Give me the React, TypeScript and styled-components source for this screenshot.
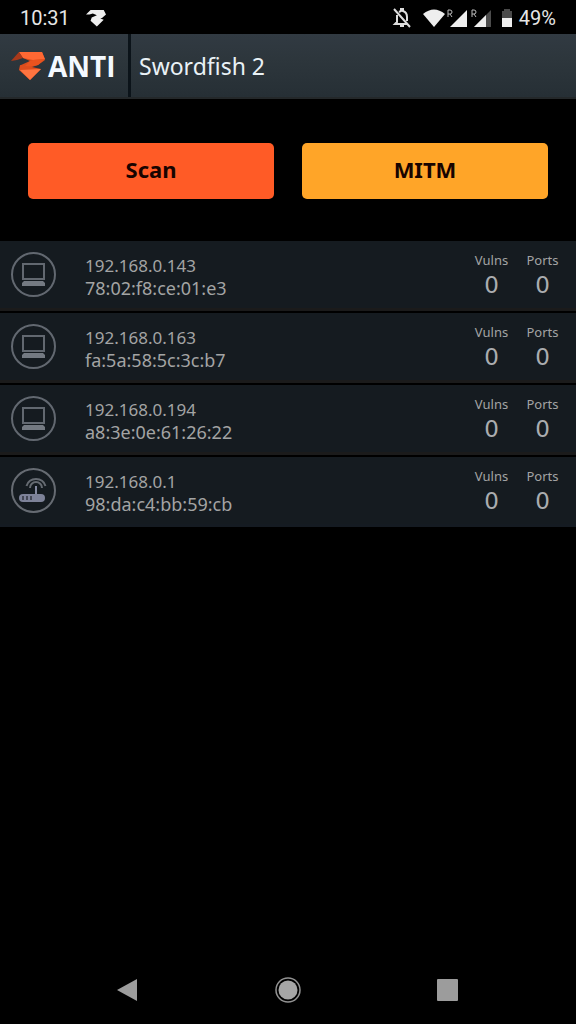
import React from "react";
import styled, { createGlobalStyle } from "styled-components";

const GlobalStyle = createGlobalStyle`
  * { box-sizing: border-box; }
  body { margin: 0; background: #000; font-family: "Noto Sans", "Open Sans", sans-serif; }
`;

const Screen = styled.div`
  min-height: 100vh;
  display: flex;
  flex-direction: column;
  background: #000;
`;

const StatusBar = styled.div`
  display: flex;
  align-items: center;
  justify-content: space-between;
  height: 34px;
  padding: 2px 20px 0;
  font: 400 20px/24px Roboto, sans-serif;
  color: #e6e6e6;
`;

const StatusGroup = styled.div<{ $gap: number }>`
  display: flex;
  align-items: center;
  gap: ${(p) => p.$gap}px;
`;

const Icon = styled.svg`
  display: block;
  flex: none;
`;

const Header = styled.header`
  display: flex;
  align-items: stretch;
  height: 65px;
  background: linear-gradient(#313a42, #2d363c 40%, #262f35);
  border-bottom: 2px solid #24282a;
`;

const Brand = styled.div`
  display: flex;
  align-items: center;
  gap: 2px;
  width: 131px;
  padding-left: 11px;
  border-right: 3px solid #0b1319;
  color: #f4f9ff;
  font: 700 28px/32px "Open Sans", sans-serif;
`;

const Title = styled.h1`
  margin: 0;
  padding: 0 8px;
  align-self: center;
  font-size: 23px;
  line-height: 32px;
  font-weight: 400;
  color: #e9f1f6;
`;

const Actions = styled.div`
  display: grid;
  grid-template-columns: 1fr 1fr;
  gap: 28px;
  padding: 44px 28px 42px;
`;

const ActionButton = styled.button<{ $color: string }>`
  height: 56px;
  padding: 0 0 4px;
  border: 0;
  border-radius: 5px;
  background: ${(p) => p.$color};
  color: #180400;
  font: 700 22px/28px "Noto Sans", sans-serif;
`;

const HostList = styled.ul`
  margin: 0;
  padding: 0;
  list-style: none;
  display: flex;
  flex-direction: column;
  gap: 2px;
`;

const HostRow = styled.li`
  display: flex;
  align-items: center;
  height: 70px;
  padding: 0 8px 0 11px;
  background: #151b20;
  border-bottom: 3px solid #1b1b1b;
  color: #a3a4a4;

  &:last-child {
    border-bottom-color: #151b22;
  }
`;

const HostText = styled.div`
  flex: 1;
  padding: 4px 0 0 28px;
  line-height: 22px;
`;

const Address = styled.div`
  font-size: 17px;
`;

const Mac = styled.div`
  font-size: 18px;
`;

const Stat = styled.div`
  display: flex;
  flex-direction: column;
  align-items: center;
  width: 51px;
`;

const StatLabel = styled.span`
  font-size: 13px;
  line-height: 20px;
`;

const StatValue = styled.span`
  font: 400 23px/30px "DejaVu Sans", sans-serif;
  color: #aaadaf;
`;

const NavBar = styled.nav`
  display: flex;
  justify-content: space-around;
  margin-top: auto;
  padding: 0 48px 10px;
`;

const NavButton = styled.button`
  display: grid;
  place-items: center;
  width: 48px;
  height: 48px;
  padding: 0;
  border: 0;
  background: none;
`;

const LogoSmall = () => (
  <Icon width="20" height="18" viewBox="0 0 35 30" fill="#eee">
    <path d="M0 9 8 1H31L35 9 28 15 25 16 31 18 19 30 8 20 10 14 19 10 12 7 6 9z" />
  </Icon>
);

const Logo = () => (
  <Icon width="35" height="30" viewBox="0 0 35 30">
    <path d="M8 1H31L34 9 27 14 21 16H9L10 14 19 10 12 7z" fill="#d94c1c" />
    <path d="M8 1H31L34 8 22 9 12 7z" fill="#ff6833" />
    <path d="M34 8 27 14 12 17 19 10 22 9z" fill="#e9531f" />
    <path d="M0 10 8 1 12 7 6 9z" fill="#a9391a" />
    <path d="M9 14 21 16 30 18 19 29 8 19z" fill="#dd4d1d" />
    <path d="M9 19 30 18 19 29z" fill="#ff7440" />
  </Icon>
);

const BellOff = () => (
  <Icon width="20" height="20" viewBox="0 0 20 20" fill="none" stroke="#ddd" strokeWidth="2">
    <path d="M2 1 18 19M5 7v7L3 16h12M7 4l2-1V1h2v2c3 1 4 3 4 6v4M8 18h4" />
  </Icon>
);

const Wifi = () => (
  <Icon width="22" height="18" viewBox="0 0 22 18" fill="#eee">
    <path d="M0 5Q11-4 22 5L11 18z" />
  </Icon>
);

const Signal = ({ level }: { level: number }) => (
  <Icon width="22" height="20" viewBox="0 0 22 20">
    <path d="M20 2v17H3z" fill={level < 1 ? "#4c4c4c" : "#eee"} />
    {level < 1 && <path d="M15 7v12H3z" fill="#eee" />}
    <path d="M1 9V2h2q2 0 2 2t-2 2H1M3 6l2 3" fill="none" stroke="#bbb" />
  </Icon>
);

const Battery = () => (
  <Icon width="12" height="18" viewBox="0 0 12 18">
    <path d="M1 2h2V0h6v2h2v7H1z" fill="#4a4a4a" />
    <path d="M1 9h10v9H1z" fill="#eee" />
  </Icon>
);

const Computer = () => (
  <Icon width="46" height="46" viewBox="0 0 46 46" fill="none" stroke="#626870">
    <circle cx="22.5" cy="22.5" r="21.5" strokeWidth="2" />
    <rect x="12" y="12" width="21" height="15" strokeWidth="2" />
    <path d="M13 29h19l2 2v3H11v-3z" fill="#747a82" stroke="none" />
  </Icon>
);

const Router = () => (
  <Icon width="46" height="46" viewBox="0 0 46 46" fill="none" stroke="#666b72">
    <circle cx="22.5" cy="22.5" r="21.5" strokeWidth="2" />
    <path d="M15.500 18a10 10 0 0 1 19 0M19 20a6 6 0 0 1 12 0" strokeWidth="2" />
    <path d="M25 18v9" stroke="#858aa0" strokeWidth="2" />
    <rect x="8" y="26" width="26" height="8" rx="4" fill="#7d8298" stroke="none" />
    <path d="M12 28v4M16 28v4M20 28v4" stroke="#30353f" strokeWidth="1.5" />
  </Icon>
);

const hosts = [
  { ip: "192.168.0.143", mac: "78:02:f8:ce:01:e3", router: false },
  { ip: "192.168.0.163", mac: "fa:5a:58:5c:3c:b7", router: false },
  { ip: "192.168.0.194", mac: "a8:3e:0e:61:26:22", router: false },
  { ip: "192.168.0.1", mac: "98:da:c4:bb:59:cb", router: true },
];

export default function App() {
  return (
    <Screen>
      <GlobalStyle />
      <StatusBar>
        <StatusGroup $gap={16}>
          <span>10:31</span>
          <LogoSmall />
        </StatusGroup>
        <StatusGroup $gap={8}>
          <StatusGroup $gap={2}>
            <StatusGroup $gap={11}>
              <BellOff />
              <Wifi />
            </StatusGroup>
            <Signal level={1} />
            <Signal level={0.6} />
          </StatusGroup>
          <StatusGroup $gap={6}>
            <Battery />
            <span>49%</span>
          </StatusGroup>
        </StatusGroup>
      </StatusBar>
      <Header>
        <Brand>
          <Logo />
          <span>ANTI</span>
        </Brand>
        <Title>Swordfish 2</Title>
      </Header>
      <Actions>
        <ActionButton $color="#ff5b26">Scan</ActionButton>
        <ActionButton $color="#ffa528">MITM</ActionButton>
      </Actions>
      <HostList>
        {hosts.map((h) => (
          <HostRow key={h.ip}>
            {h.router ? <Router /> : <Computer />}
            <HostText>
              <Address>{h.ip}</Address>
              <Mac>{h.mac}</Mac>
            </HostText>
            <Stat>
              <StatLabel>Vulns</StatLabel>
              <StatValue>0</StatValue>
            </Stat>
            <Stat>
              <StatLabel>Ports</StatLabel>
              <StatValue>0</StatValue>
            </Stat>
          </HostRow>
        ))}
      </HostList>
      <NavBar>
        <NavButton aria-label="Back">
          <Icon width="24" height="24" viewBox="0 0 24 24" fill="#9c9c9c">
            <path d="M1 12 21 1v22z" />
          </Icon>
        </NavButton>
        <NavButton aria-label="Home">
          <Icon width="26" height="26" viewBox="0 0 26 26">
            <circle cx="13" cy="13" r="12" fill="none" stroke="#929292" strokeWidth="1.5" />
            <circle cx="13" cy="13" r="9.5" fill="#a6a6a6" />
          </Icon>
        </NavButton>
        <NavButton aria-label="Recent apps">
          <Icon width="22" height="22" viewBox="0 0 22 22" fill="#9c9c9c">
            <rect width="21" height="22" rx="1" />
          </Icon>
        </NavButton>
      </NavBar>
    </Screen>
  );
}
